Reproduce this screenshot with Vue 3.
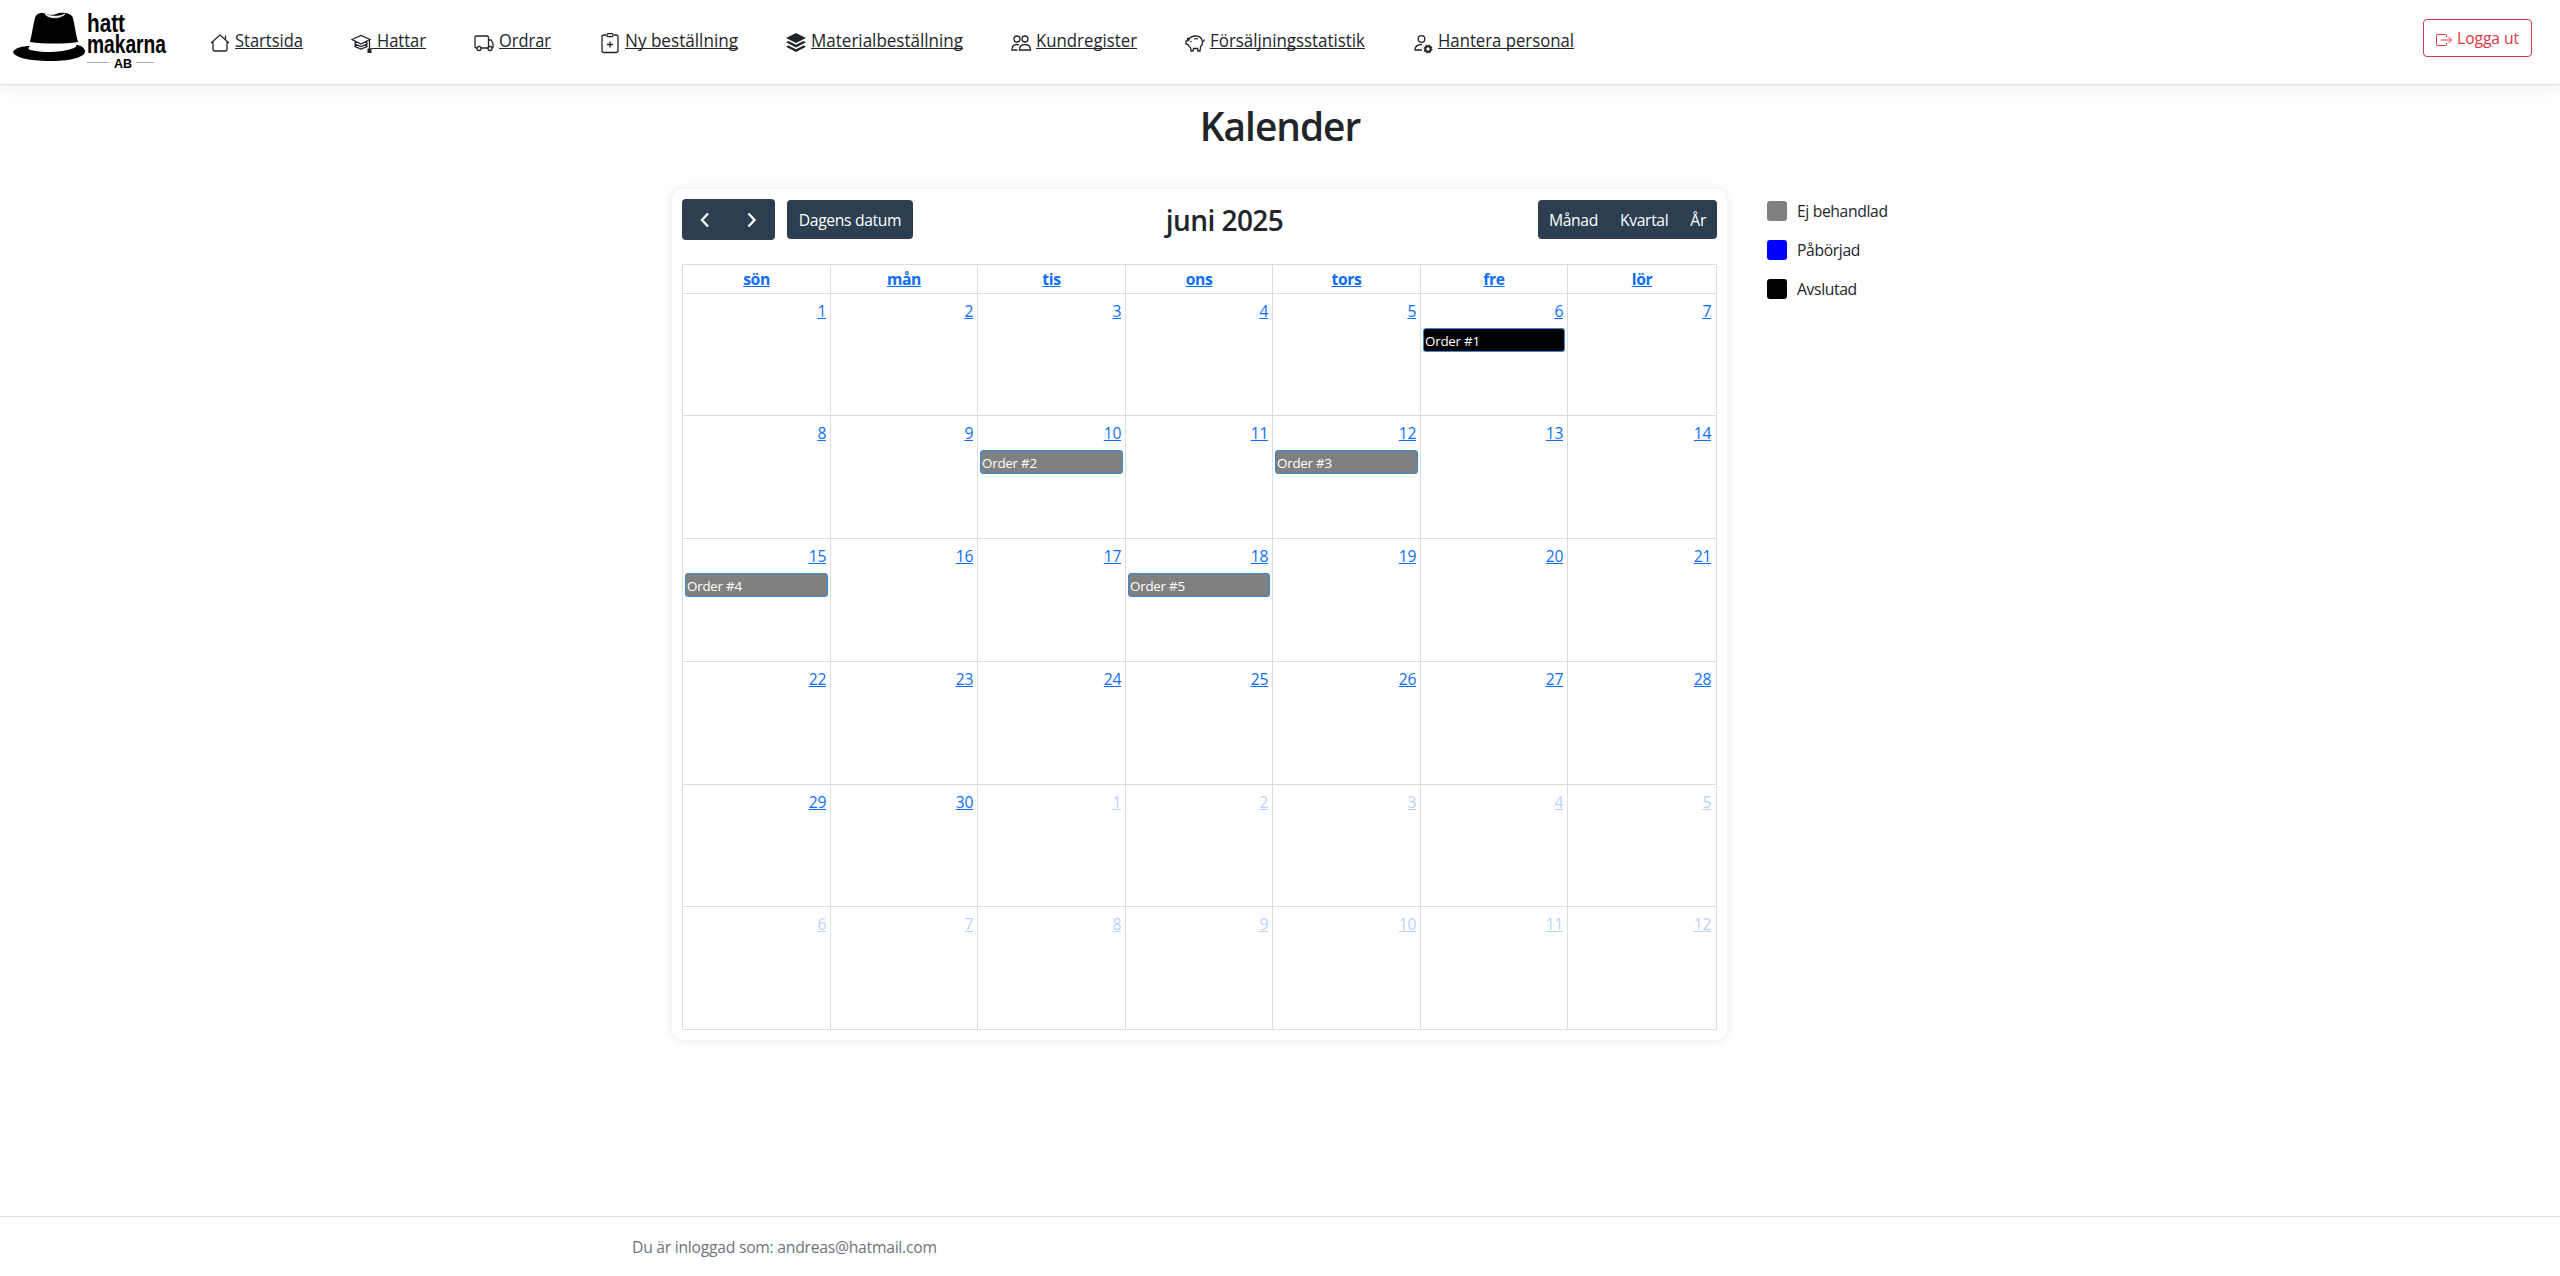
<script setup>
const nav = [
  { id: 'home', label: 'Startsida', w: 68 },
  { id: 'cap', label: 'Hattar', w: 49, lead: true },
  { id: 'truck', label: 'Ordrar', w: 52 },
  { id: 'clip', label: 'Ny beställning', w: 113 },
  { id: 'layers', label: 'Materialbeställning', w: 152 },
  { id: 'people', label: 'Kundregister', w: 101 },
  { id: 'pig', label: 'Försäljningsstatistik', w: 155 },
  { id: 'gear', label: 'Hantera personal', w: 136 },
]
const days = ['sön', 'mån', 'tis', 'ons', 'tors', 'fre', 'lör']
const orders = { 5: ['Order #1', 'done'], 9: ['Order #2', ''], 11: ['Order #3', ''], 14: ['Order #4', ''], 17: ['Order #5', ''] }
const cells = Array.from({ length: 42 }, (_, i) => ({
  n: i < 30 ? i + 1 : i - 29,
  other: i >= 30,
  order: orders[i],
}))
</script>

<template>
  <div class="page">
    <header>
      <svg class="logo" width="156" height="60" viewBox="0 0 156 60">
        <path d="M0 41C2 37 9 35 17 35C15 37 15 38 17 39C31 42 48 42 61 37C63 36 64 35 63 34C67 34 71 36 72 40C73 45 61 50 37 50C15 50 1 46 0 41Z" />
        <path d="M17 31C19 23 20 14 22 7C23 3 26 2 30 2C33 3 38 5 43 3C48 1 55 1 59 5C61 8 62 20 65 31C52 33 30 33 17 31Z" />
        <path d="M32 3C36 8 47 8 52 3C47 6 38 6 32 3Z" fill="#fff" stroke="#fff" stroke-width=".8" />
        <text x="74" y="20.500" textLength="38" lengthAdjust="spacingAndGlyphs" class="word">hatt</text>
        <text x="74" y="41.500" textLength="79" lengthAdjust="spacingAndGlyphs" class="word">makarna</text>
        <text x="101" y="56.500" textLength="18" lengthAdjust="spacingAndGlyphs" class="ab">AB</text>
        <path d="M74 51.500H96M123 51.500H141" stroke="#aaa" />
      </svg>
      <nav>
        <a v-for="n in nav" :key="n.id" :class="n.id">
          <svg class="ic" viewBox="0 0 20 20" width="20" height="20">
            <g v-if="n.id === 'home'"><path d="M1 10L10 2L19 10M3 9V16Q3 18 5 18H15Q17 18 17 16V9M15.500 6.500V2.500" /></g>
            <g v-else-if="n.id === 'cap'"><path d="M1 6.500L10 2.500L19 6.500L10 11ZM4.500 8.500L4 11L10 13.500L16 11L15.500 8.500M4.500 11.500L4 13.500L10 16L16 13.500L15.500 11.500M18.500 7V17" /><path d="M16.500 15.500H20.500V20H16.500Z" class="solid" /></g>
            <g v-else-if="n.id === 'truck'"><path d="M3 15H2.500Q1 15 1 13.500V4Q1 3 2.500 3H13Q14.500 3 14.500 4.500V15H7M14.500 7H17L19 10.500V14Q19 15 18 15" /><circle cx="5" cy="15.500" r="2" class="hole" /><circle cx="16" cy="15.500" r="2" class="hole" /></g>
            <g v-else-if="n.id === 'clip'"><path d="M6 2H4Q2 2 2 4V17.500Q2 19.500 4 19.500H16Q18 19.500 18 17.500V4Q18 2 16 2H14M10 8.500V14.500M7 11.500H13" /><rect x="7" y=".7" width="6" height="3" rx="1" /></g>
            <g v-else-if="n.id === 'layers'" class="solid"><path d="M10 0L20 5L10 10L0 5ZM2.500 8L10 11.700L17.500 8L20 9.300L10 14.500L0 9.300ZM2.500 12.500L10 16.200L17.500 12.500L20 13.800L10 19L0 13.800Z" /></g>
            <g v-else-if="n.id === 'people'"><circle cx="6" cy="6" r="3" /><circle cx="14" cy="6" r="3" /><path d="M6.500 17H1Q1 11.500 5.500 11.500Q7 11.500 8 12M8.500 17H19.500Q19.500 11.500 14 11.500T8.500 17Z" /></g>
            <g v-else-if="n.id === 'pig'"><path d="M3.500 7.500Q5 3 10.500 3Q16.500 3 17.500 8.500Q17.800 12 15.500 14L15 18H13L12.500 15.500H8.500L8 18H6L5.500 14.500Q4 13.500 3 11.500L1 11V8ZM9 6Q11 5.300 13 6M17.500 8.500Q19.500 8.500 19 6.500M2.500 8V5.500L4.500 5.500" /><circle cx="6" cy="8.500" r=".8" class="solid" /></g>
            <g v-else><circle cx="8.500" cy="6" r="3.300" /><path d="M9 17H2Q2 11.500 9 11.500" /><circle cx="15" cy="16" r="2.700" stroke-width="2" /><circle cx="15" cy="16" r="3.800" stroke-dasharray="1.600 1.380" /></g>
          </svg>
          <span class="label" :class="{ lead: n.lead }">
            <svg :width="n.w" height="27"><text x="0" y="20" :textLength="n.w" lengthAdjust="spacingAndGlyphs">{{ n.label }}</text></svg>
          </span>
        </a>
      </nav>
      <button class="logout">
        <svg width="16" height="16" viewBox="0 0 16 16"><path d="M10.500 5V3.500Q10.500 2.500 9.500 2.500H1.500Q.5 2.500 .5 3.500V12.500Q.5 13.500 1.500 13.500H9.500Q10.500 13.500 10.500 12.500V11M5 8H15.500M12.500 5L15.500 8L12.500 11" /></svg>
        <span>Logga ut</span>
      </button>
    </header>
    <main>
      <h1>Kalender</h1>
      <div class="content">
        <section class="card">
          <div class="toolbar">
            <div class="left">
              <div class="arrows">
                <svg viewBox="0 0 24 24"><path d="M15 5.500L9 12L15 18.500" /></svg>
                <svg viewBox="0 0 24 24"><path d="M8.500 5.500L14.500 12L8.500 18.500" /></svg>
              </div>
              <button class="btn today">Dagens datum</button>
            </div>
            <h2>juni 2025</h2>
            <div class="btn views"><span>Månad</span><span>Kvartal</span><span>År</span></div>
          </div>
          <div class="grid">
            <div v-for="d in days" :key="d" class="head"><a>{{ d }}</a></div>
            <div v-for="(c, i) in cells" :key="i" class="cell">
              <a :class="{ other: c.other }">{{ c.n }}</a>
              <div v-if="c.order" class="event" :class="c.order[1]">{{ c.order[0] }}</div>
            </div>
          </div>
        </section>
        <aside>
          <div><i class="gray"></i>Ej behandlad</div>
          <div><i class="blue"></i>Påbörjad</div>
          <div><i class="black"></i>Avslutad</div>
        </aside>
      </div>
    </main>
    <footer>Du är inloggad som: andreas@hatmail.com</footer>
  </div>
</template>

<style>
body { margin: 0; background: #fff; }
</style>

<style scoped>
* { box-sizing: border-box; }
.page { height: 1276px; display: flex; flex-direction: column; overflow: hidden; font: 15.7px/24px "Open Sans", sans-serif; color: #212529; letter-spacing: -0.36px; }
header { height: 85px; flex: none; border-bottom: 1px solid #dee2e6; box-shadow: 0 2px 16px rgba(0,0,0,.08); display: flex; align-items: flex-start; padding: 0 28px 0 13px; }
.logo { margin-top: 11px; flex: none; overflow: visible; }
.word { font: bold 25px "Liberation Sans", sans-serif; letter-spacing: 0; }
.ab { font: bold 13px "Liberation Sans", sans-serif; letter-spacing: 0; }
nav { display: flex; gap: 48.200px; margin: 27px 0 0 41px; }
nav a { display: flex; height: 27px; }
.ic { margin: 6px 5px 0 0; flex: none; overflow: visible; fill: none; stroke: #212529; stroke-width: 1.3; }
.solid { fill: #212529; stroke: none; }
.hole { fill: #fff; }
.label { height: 22px; border-bottom: 1px solid #212529; }
.label svg { display: block; overflow: visible; font-size: 17.7px; letter-spacing: 0; fill: #212529; }
.cap .ic { margin-right: 0; }
.lead { padding-left: 6px; }
.logout { margin: 19px 0 0 auto; width: 109px; height: 38px; display: flex; align-items: center; justify-content: center; gap: 5px; background: #fff; border: 1px solid #dc3545; border-radius: 4px; color: #dc3545; font: inherit; letter-spacing: -.1px; padding: 0; }
.logout svg { fill: none; stroke: #dc3545; margin-top: 3px; }
main { flex: 1; }
h1 { margin: 17px 0 0; height: 48px; text-align: center; font: 600 38.800px/48px "Open Sans", sans-serif; letter-spacing: -1px; }
.content { margin: 39px 0 0 672px; display: flex; align-items: flex-start; }
.card { width: 1055px; height: 851px; border-radius: 10px; box-shadow: 0 0 10px rgba(0,0,0,.1); padding: 10px; }
.toolbar { height: 41px; display: flex; align-items: center; justify-content: space-between; }
.left { display: flex; align-items: center; gap: 12px; }
.arrows { display: flex; width: 93px; height: 41px; background: #2c3e50; border-radius: 4px; align-items: center; justify-content: space-around; }
.arrows svg { width: 24px; fill: none; stroke: #fff; stroke-width: 2.3; }
.btn { height: 39px; background: #2c3e50; border: 0; border-radius: 4px; color: #fff; font: inherit; letter-spacing: inherit; padding: 0; }
.today { width: 126px; }
h2 { margin: 0 2px 0 0; font: 600 28px/34px "Open Sans", sans-serif; letter-spacing: -.55px; }
.views { width: 179px; display: flex; align-items: center; justify-content: space-between; padding: 0 11px; }
.grid { margin-top: 24px; width: 1035px; display: grid; grid-template-columns: 148px 147px 148px 147px 148px 147px 148px; grid-template-rows: 29px 122px repeat(3, 123px) 122px 123px; border: 1px solid #ddd; height: 766px; }
.head, .cell { border-right: 1px solid #ddd; border-bottom: 1px solid #ddd; }
.head { text-align: center; font-weight: 700; line-height: 28px; }
.grid a { color: #0d6efd; text-decoration: underline; }
.cell { padding: 5px 4px 4px; text-align: right; }
.cell:nth-child(7n) { padding-right: 5px; }
.head:nth-child(7n), .cell:nth-child(7n) { border-right: 0; }
.cell:nth-child(n + 43) { border-bottom: 0; }
.cell a.other { opacity: .3; }
.event { height: 24px; margin: 5px -2px 0; border: 1px solid #3788d8; border-radius: 3px; background: gray; color: #fff; font-size: 13.4px; letter-spacing: -.25px; line-height: 24px; text-align: left; padding-left: 1px; }
.event.done { background: #000; }
aside { margin: 10px 0 0 40px; display: flex; flex-direction: column; gap: 15px; }
aside div { display: flex; align-items: center; gap: 10px; height: 24px; }
aside i { width: 20px; height: 20px; border-radius: 3px; }
.gray { background: gray; }
.blue { background: #00f; }
.black { background: #000; }
footer { height: 60px; flex: none; border-top: 1px solid #dee2e6; padding: 18px 0 0 632px; color: #6c757d; letter-spacing: -.25px; }
</style>
